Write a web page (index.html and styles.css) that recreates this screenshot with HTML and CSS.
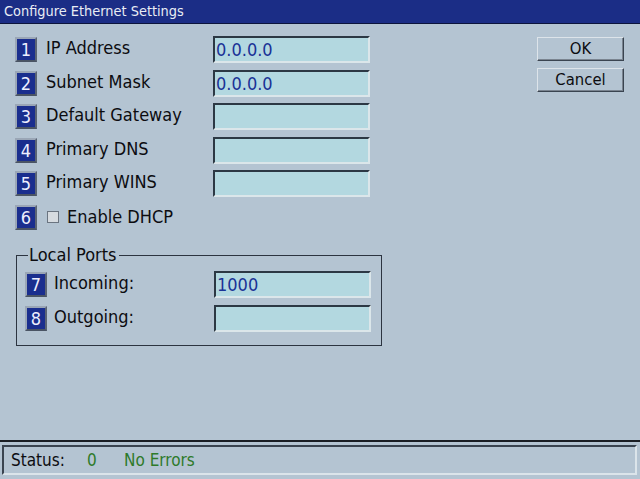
FILE: index.html
```html
<!DOCTYPE html>
<html>
<head>
<meta charset="utf-8">
<link rel="stylesheet" href="styles.css">
</head>
<body>
<div class="screen">
  <div class="titlebar">Configure Ethernet Settings</div>
  <div class="main">
    <div class="form">
      <div class="row"><span class="num">1</span><span class="label">IP Address</span><span class="field">0.0.0.0</span></div>
      <div class="row"><span class="num">2</span><span class="label">Subnet Mask</span><span class="field">0.0.0.0</span></div>
      <div class="row"><span class="num">3</span><span class="label">Default Gateway</span><span class="field"></span></div>
      <div class="row"><span class="num">4</span><span class="label">Primary DNS</span><span class="field"></span></div>
      <div class="row"><span class="num">5</span><span class="label">Primary WINS</span><span class="field"></span></div>
      <div class="row check-row"><span class="num">6</span><span class="checkbox"></span><span class="label">Enable DHCP</span></div>
      <fieldset class="group">
        <legend>Local Ports</legend>
        <div class="grow"><span class="num">7</span><span class="glabel">Incoming:</span><span class="field">1000</span></div>
        <div class="grow"><span class="num">8</span><span class="glabel">Outgoing:</span><span class="field"></span></div>
      </fieldset>
    </div>
    <div class="buttons">
      <div class="btn">OK</div>
      <div class="btn">Cancel</div>
    </div>
  </div>
  <div class="statusbar">
    <div class="statuspanel">
      <span class="st-label">Status:</span>
      <span class="st-code">0</span>
      <span class="st-msg">No Errors</span>
    </div>
  </div>
</div>
</body>
</html>
```
FILE: styles.css
```css
html, body {
  margin: 0;
  padding: 0;
}
body {
  width: 640px;
  height: 479px;
  overflow: hidden;
  background: #b4c4d2;
  font-family: "DejaVu Sans Condensed", "DejaVu Sans", sans-serif;
  color: #0c0c10;
}
.screen {
  width: 640px;
  height: 479px;
  display: flex;
  flex-direction: column;
  background: #b4c4d2;
}
.titlebar {
  height: 24px;
  background: #1b2d86;
  color: #e8ecf4;
  font-size: 14.4px;
  line-height: 23px;
  padding-left: 4px;
  border-bottom: 1px solid #0c143c;
  box-sizing: border-box;
}
.main {
  flex: 1;
  display: flex;
  justify-content: space-between;
  padding: 9px 16px 0 15px;
}
.form {
  display: flex;
  flex-direction: column;
  width: 368px;
}
.row {
  display: flex;
  align-items: center;
  height: 33.5px;
}
.num {
  width: 22px;
  height: 25px;
  box-sizing: border-box;
  background: #1a2e8e;
  border: 2px solid;
  border-color: #9aa6b6 #5a6474 #4a5464 #9aa6b6;
  color: #eef;
  font-size: 18px;
  line-height: 22px;
  text-align: center;
  flex: none;
}
.label {
  margin-left: 9px;
  font-size: 18px;
  width: 167px;
  line-height: 20px;
  margin-top: -3px;
}
.field {
  width: 157px;
  height: 27px;
  box-sizing: border-box;
  background: #b3d8e0;
  border: 2px solid;
  border-color: #2c3844 #dbe6ea #dbe6ea #2c3844;
  color: #1a3296;
  font-size: 18px;
  line-height: 23px;
  padding-left: 1px;
  flex: none;
}
.check-row .label {
  margin-left: 8px;
  margin-top: 0;
}
.checkbox {
  width: 12px;
  height: 12px;
  box-sizing: border-box;
  margin-left: 10px;
  background: #d6dbe0;
  border: 1px solid #6a7480;
  flex: none;
}
.group {
  margin: 14px 0 0 1px;
  padding: 5px 0 10px 8px;
  width: 366px;
  box-sizing: border-box;
  border: 1px solid #2c3440;
}
.group legend {
  font-size: 18px;
  padding: 0 2px 0 1px;
  margin-left: 3px;
  line-height: 14px;
}
.grow {
  display: flex;
  align-items: center;
  height: 34px;
}
.glabel {
  margin-left: 7px;
  font-size: 18px;
  width: 160px;
  line-height: 20px;
  margin-top: -3px;
}
.buttons {
  display: flex;
  flex-direction: column;
  gap: 7px;
  padding-top: 4px;
}
.btn {
  width: 87px;
  height: 24px;
  box-sizing: border-box;
  border: 1px solid;
  border-color: #dde4ea #3a4450 #3a4450 #dde4ea;
  box-shadow: inset -1px -1px 0 #7a8490;
  font-size: 16.5px;
  line-height: 22px;
  text-align: center;
}
.statusbar {
  height: 39px;
  box-sizing: border-box;
  border-top: 2px solid #1a1e24;
  padding: 3px 3px 4px 2px;
}
.statuspanel {
  height: 100%;
  box-sizing: border-box;
  border: 2px solid;
  border-color: #3a4450 #dbe4ea #dbe4ea #3a4450;
  display: flex;
  align-items: center;
  font-size: 17px;
  padding-left: 7px;
}
.st-label {
  width: 76px;
}
.st-code {
  width: 37px;
  color: #2e7a2a;
}
.st-msg {
  color: #2e7a2a;
}
```
